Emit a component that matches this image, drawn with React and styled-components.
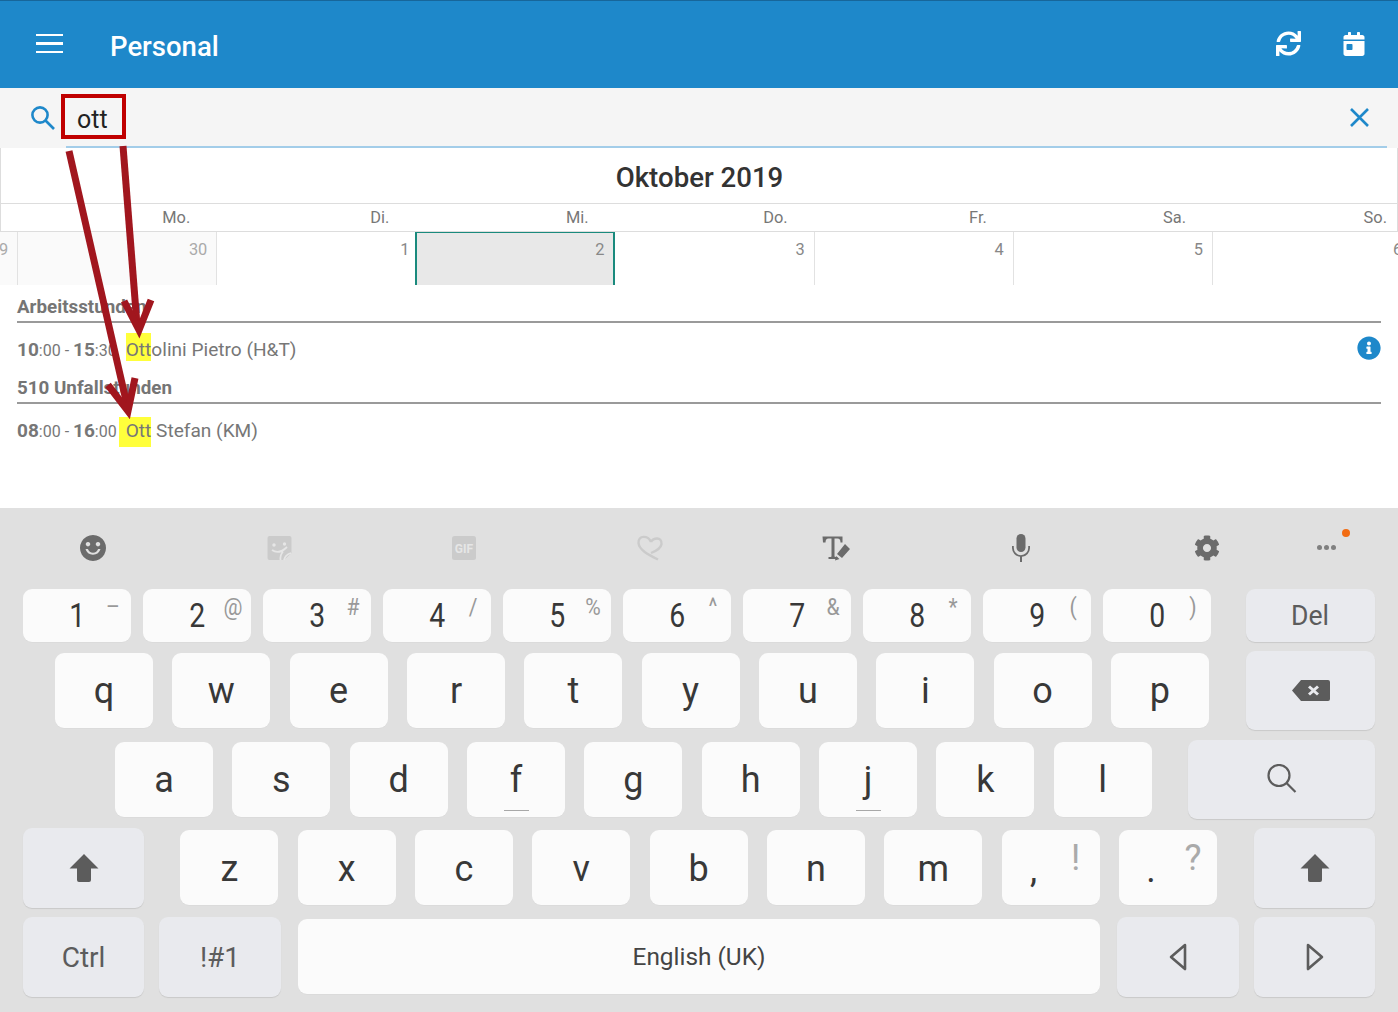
import React from 'react'
import styled, { createGlobalStyle } from 'styled-components'
import { FaSync, FaCalendarDay, FaInfoCircle, FaCog } from 'react-icons/fa'

const Global = createGlobalStyle`
  html, body { margin: 0; padding: 0; background: #fff; }
  body { font-family: Roboto, "Liberation Sans", sans-serif; }
`

const Page = styled.div`
  position: relative;
  width: 1398px;
  height: 1012px;
  overflow: hidden;
  display: flex;
  flex-direction: column;
  background: #fff;
`

const Header = styled.header`
  box-sizing: border-box;
  height: 88px;
  flex: none;
  background: #1e88ca;
  border-top: 1px solid #17669a;
  display: flex;
  align-items: center;
  color: #fff;
  padding: 0 32px 0 36px;
`
const Burger = styled.div`
  width: 27px;
  display: flex;
  flex-direction: column;
  gap: 6px;
  margin-right: 47px;
  margin-top: -2px;
  span { display: block; height: 2.5px; background: #fff; }
`
const Title = styled.div`
  flex: 1;
  font-size: 27.5px;
  font-weight: 500;
  margin-top: 4px;
`
const HeaderIcons = styled.div`
  display: flex;
  align-items: center;
  gap: 41px;
  margin-top: -2px;
`

const SearchBar = styled.div`
  position: relative;
  box-sizing: border-box;
  height: 60px;
  flex: none;
  background: #f5f5f5;
  display: flex;
  align-items: flex-start;
  padding: 6px 28px 0 30px;
  &::after {
    content: '';
    position: absolute;
    left: 66px;
    right: 11px;
    bottom: 0;
    height: 2px;
    background: #a3cde9;
  }
`
const SearchIcon = styled.svg`
  width: 26px;
  height: 26px;
  margin: 11px 5px 0 0;
  flex: none;
`
const Query = styled.div`
  box-sizing: border-box;
  width: 65px;
  height: 45px;
  border: 4px solid #c00000;
  font-size: 25px;
  line-height: 44px;
  padding-left: 12px;
  color: #222;
`
const CloseIcon = styled.svg`
  width: 21px;
  height: 21px;
  margin: 13px 0 0 auto;
`

const MonthTitle = styled.div`
  box-sizing: border-box;
  height: 55px;
  flex: none;
  display: flex;
  align-items: center;
  justify-content: center;
  padding: 3px 0 0 1px;
  font-size: 27.6px;
  font-weight: 500;
  color: #333;
  border: 1px solid #ddd;
  border-top: 0;
  border-bottom: 0;
`
const WeekRow = styled.div`
  box-sizing: border-box;
  height: 29px;
  flex: none;
  display: flex;
  justify-content: flex-end;
  padding-right: 10px;
  border: 1px solid #ddd;
  overflow: hidden;
`
const WeekDay = styled.div`
  flex: none;
  width: 199.17px;
  text-align: right;
  font-size: 16.4px;
  line-height: 28px;
  color: #777;
  &:last-child { width: 201px; }
`
const DateRow = styled.div`
  height: 53px;
  flex: none;
  display: flex;
  margin-left: -181px;
  width: 1600px;
`
const DateCell = styled.div`
  box-sizing: border-box;
  flex: none;
  width: 199.17px;
  text-align: right;
  font-size: 16.4px;
  line-height: 36px;
  padding-right: ${p => p.$pr || '9px'};
  color: ${p => (p.$past ? '#aaa' : '#888')};
  background: ${p => (p.$selected ? '#e8e8e8' : p.$past ? '#fafafa' : '#fff')};
  border-right: 1px solid #e2e2e2;
  ${p => p.$selected && `
    border-left: 2px solid #1a8a7d;
    border-right: 2px solid #1a8a7d;
    border-top: 1px solid #1a8a7d;
    line-height: 34px;
    margin-left: -1px;
    width: 200px;
  `}
`

const Entries = styled.div`
  flex: 1;
  padding: 10px 17px 0;
`
const SectionTitle = styled.div`
  box-sizing: border-box;
  height: 28px;
  font-size: 18.8px;
  font-weight: 700;
  line-height: 24px;
  color: #757575;
  border-bottom: 2px solid #9a9a9a;
`
const EntryRow = styled.div`
  box-sizing: border-box;
  height: 53px;
  padding-top: 16px;
  display: flex;
  align-items: baseline;
  font-size: 19.1px;
  line-height: 22px;
  color: #777;
  white-space: pre;
`
const Time = styled.span`
  font-size: 16px;
  b { font-size: 19px; font-weight: 700; }
`
const Mark = styled.span`
  background: #ffff3b;
  margin: ${p => (p.$lead ? '-3px 0 -5px 2px' : '-6px 0 0 9px')};
  padding: ${p => (p.$lead ? '3px 0 5px 7px' : '6px 0 0')};
`
const InfoIcon = styled.div`
  align-self: flex-start;
  margin: -3px 0 0 auto;
  display: flex;
`

const Keyboard = styled.div`
  height: 504px;
  flex: none;
  background: #e0e0e0;
  color: #383838;
`
const ToolBar = styled.div`
  height: 81px;
  display: grid;
  grid-template-columns: repeat(7, 185.7px) 54px;
  align-items: center;
  justify-items: center;
  padding-bottom: 2px;
  box-sizing: border-box;
`
const ToolIcon = styled.svg`
  width: 30px;
  height: 30px;
  fill: ${p => (p.$off ? '#cbcbcb' : '#6b6b6b')};
`
const Dots = styled.div`
  position: relative;
  display: flex;
  gap: 2px;
  span { width: 5px; height: 5px; border-radius: 50%; background: #808080; }
  &::after {
    content: '';
    position: absolute;
    top: -16px;
    right: -14px;
    width: 8px;
    height: 8px;
    border-radius: 50%;
    background: #f26c13;
  }
`
const Row = styled.div`
  display: flex;
  align-items: center;
  gap: ${p => p.$gap || '19.33px'};
  height: ${p => p.$h};
  margin-top: ${p => p.$mt || '9px'};
  padding: 0 23px 0 ${p => p.$pl || '23px'};
`
const Key = styled.div`
  position: relative;
  box-sizing: border-box;
  flex: none;
  width: ${p => p.$w || '98px'};
  height: ${p => p.$h || '75px'};
  margin-bottom: 1px;
  padding-top: 2px;
  border-radius: 9px;
  background: #fbfbfb;
  display: flex;
  align-items: center;
  justify-content: center;
  font-size: 36px;
  box-shadow: 0 1px 0 rgba(0,0,0,0.02);
`
const FnKey = styled(Key)`
  background: #e9eaee;
  font-size: 28px;
  color: #5c5c5c;
  box-shadow: 0 1px 1px rgba(0,0,0,0.1);
  margin-bottom: 0;
  padding-top: 0;
  margin-left: ${p => p.$ml || '0'};
`
const Digit = styled.span`
  display: block;
  font-size: 33px;
  margin-top: -2px;
  transform: scaleX(0.86);
`
const Hint = styled.span`
  position: absolute;
  left: 90px;
  top: 18px;
  transform: translate(-50%, -50%) scaleX(0.88);
  font-size: 24px;
  color: #999;
`
const BigHint = styled.span`
  position: absolute;
  left: 74px;
  top: 28px;
  transform: translate(-50%, -50%);
  font-size: 36px;
  color: #aaa;
`
const Underline = styled.span`
  position: absolute;
  left: 37px;
  bottom: 6px;
  width: 25px;
  height: 1px;
  background: #a8a8a8;
`
const Narrow = styled.span`
  display: block;
  transform: scaleX(0.95);
`
const Punct = styled.span`
  display: block;
  margin: 2px 34px 0 0;
`
const SpaceKey = styled(Key)`
  font-size: 24.4px;
  color: #444;
  margin-left: 2px;
  padding-top: 0;
`
const LeadKey = styled(Key)`
  margin-left: 17px;
`

const numbers = [['1', '–'], ['2', '@'], ['3', '#'], ['4', '/'], ['5', '%'], ['6', '^'], ['7', '&'], ['8', '*'], ['9', '('], ['0', ')']]
const dates = [['29', 1], ['30', 1], ['1', 0, 0, '6px'], ['2', 0, 1], ['3'], ['4'], ['5'], ['6']]
const days = ['Mo.', 'Di.', 'Mi.', 'Do.', 'Fr.', 'Sa.', 'So.']

const Arrows = styled.svg`
  position: absolute;
  left: 0;
  top: 0;
  pointer-events: none;
`

const ShiftIcon = () => (
  <svg width="30" height="30" viewBox="0 0 30 30" fill="#5c5c5c">
    <path d="M15 1 L29.5 15.5 L22 15.5 L22 27 Q22 29 20 29 L10 29 Q8 29 8 27 L8 15.5 L0.5 15.5 Z" />
  </svg>
)

export default function App() {
  return (
    <Page>
      <Global />
      <Header>
        <Burger><span /><span /><span /></Burger>
        <Title>Personal</Title>
        <HeaderIcons>
          <FaSync size={25} />
          <FaCalendarDay size={24} />
        </HeaderIcons>
      </Header>

      <SearchBar>
        <SearchIcon viewBox="0 0 26 26" fill="none" stroke="#1e88ca" strokeWidth="2.6">
          <circle cx="10" cy="10" r="7.6" />
          <path d="M15.5 15.5 L24 24" />
        </SearchIcon>
        <Query>ott</Query>
        <CloseIcon viewBox="0 0 21 21" fill="none" stroke="#1e88ca" strokeWidth="2.6">
          <path d="M2 2 L19 19 M19 2 L2 19" />
        </CloseIcon>
      </SearchBar>

      <MonthTitle>Oktober 2019</MonthTitle>
      <WeekRow>
        {days.map(d => <WeekDay key={d}>{d}</WeekDay>)}
      </WeekRow>
      <DateRow>
        {dates.map(([d, past, sel, pr]) => (
          <DateCell key={d} $past={!!past} $selected={!!sel} $pr={pr}>{d}</DateCell>
        ))}
      </DateRow>

      <Entries>
        <SectionTitle>Arbeitsstunden</SectionTitle>
        <EntryRow>
          <Time><b>10</b>:00 - <b>15</b>:30</Time>
          <Mark>Ott</Mark>olini Pietro (H&amp;T)
          <InfoIcon><FaInfoCircle size={24} color="#1e88ca" /></InfoIcon>
        </EntryRow>
        <SectionTitle>510 Unfallstunden</SectionTitle>
        <EntryRow>
          <Time><b>08</b>:00 - <b>16</b>:00</Time>
          <Mark $lead>Ott</Mark> Stefan (KM)
        </EntryRow>
      </Entries>

      <Keyboard>
        <ToolBar>
          <ToolIcon viewBox="0 0 30 30">
            <path fillRule="evenodd" d="M15 2 a13 13 0 1 0 0.01 0 Z M10 9 a2.2 2.2 0 1 1 -0.01 0 Z M20 9 a2.2 2.2 0 1 1 -0.01 0 Z M7.5 16 h2.4 a5.4 5.4 0 0 0 10.2 0 h2.4 a7.8 7.8 0 0 1 -15 0 Z" />
          </ToolIcon>
          <ToolIcon $off viewBox="0 0 30 30">
            <path d="M5.5 3 h20 a2 2 0 0 1 2 2 v15 l-7.5 7 h-14.5 a2 2 0 0 1 -2 -2 v-20 a2 2 0 0 1 2 -2 Z" />
            <circle cx="10" cy="12" r="1.7" fill="#e6e6e6" />
            <circle cx="20.5" cy="11" r="1.7" fill="#e6e6e6" />
            <path d="M8 17 Q15 22 23 14 M19 18.5 Q16 22 16.5 27 M20 27 Q21 22 27 20" fill="none" stroke="#e6e6e6" strokeWidth="1.8" />
          </ToolIcon>
          <ToolIcon $off viewBox="0 0 30 30">
            <rect x="3" y="3" width="24" height="24" rx="2.5" />
            <text x="15" y="19.5" textAnchor="middle" fontSize="12" fontWeight="700" fontFamily="Roboto, sans-serif" fill="#e6e6e6">GIF</text>
          </ToolIcon>
          <ToolIcon $off viewBox="0 0 30 30" style={{ fill: 'none' }}>
            <path d="M16 9 C13 2 3 2 3.5 10 C4 17 14 22 23 26.5 M16 9 C18 5 27 3 26.5 11 C26 15 21 18 16 20" stroke="#cbcbcb" strokeWidth="2.4" />
          </ToolIcon>
          <ToolIcon viewBox="0 0 30 30">
            <path d="M1.5 3.5 h20 v6 h-2 q0 -4 -3 -4 h-3 v18 q0 .6 3 .6 v2 h-9 v-2 q3 0 3 -.6 v-18 h-3 q-3 0 -3 4 h-2.5 Z" />
            <path d="M24 11 L29 16 L21 25 L16 21 Z M15 23 L18.5 26 L14 27.5 Z" />
          </ToolIcon>
          <ToolIcon viewBox="0 0 30 30">
            <rect x="10.5" y="1" width="9" height="18" rx="4.5" />
            <path d="M6 13 v2 a9 9 0 0 0 8 8.8 v5.2 h2 v-5.2 a9 9 0 0 0 8 -8.8 v-2 h-1.8 v2 a7.2 7.2 0 0 1 -14.4 0 v-2 Z" />
          </ToolIcon>
          <FaCog size={26} color="#6b6b6b" />
          <Dots><span /><span /><span /></Dots>
        </ToolBar>

        <Row $h="53px" $gap="12px" $mt="0">
          {numbers.map(([n, h]) => (
            <Key key={n} $w="108px" $h="53px">
              <Digit>{n}</Digit><Hint>{h}</Hint>
            </Key>
          ))}
          <FnKey $w="129px" $h="53px" $ml="auto"><Narrow>Del</Narrow></FnKey>
        </Row>

        <Row $h="79px" $pl="55px">
          {'qwertyuiop'.split('').map(c => <Key key={c}>{c}</Key>)}
          <FnKey $w="129px" $h="79px" $ml="auto">
            <svg width="40" height="26" viewBox="0 0 40 26" fill="#5c5c5c">
              <path fillRule="evenodd" d="M10 2 H37 a2 2 0 0 1 2 2 V21 a2 2 0 0 1 -2 2 H10 L1 12.5 Z M19 7.5 L17 9.5 L20.5 12.5 L17 15.5 L19 17.5 L22.5 14.5 L26 17.5 L28 15.5 L24.5 12.5 L28 9.5 L26 7.5 L22.5 10.5 Z" />
            </svg>
          </FnKey>
        </Row>

        <Row $h="79px" $pl="115px" $mt="10px">
          {'asdfghjkl'.split('').map(c => (
            <Key key={c}>{c}{(c === 'f' || c === 'j') && <Underline />}</Key>
          ))}
          <FnKey $w="187px" $h="79px" $ml="auto">
            <svg width="32" height="32" viewBox="0 0 32 32" fill="none" stroke="#5c5c5c" strokeWidth="2.2">
              <circle cx="13" cy="11.5" r="10.5" />
              <path d="M20.5 19 L29.5 28" />
            </svg>
          </FnKey>
        </Row>

        <Row $h="80px">
          <FnKey $w="121px" $h="80px"><ShiftIcon /></FnKey>
          <LeadKey>z</LeadKey>
          {'xcvbnm'.split('').map(c => <Key key={c}>{c}</Key>)}
          <Key><Punct>,</Punct><BigHint>!</BigHint></Key>
          <Key><Punct>.</Punct><BigHint>?</BigHint></Key>
          <FnKey $w="121px" $h="80px" $ml="auto"><ShiftIcon /></FnKey>
        </Row>

        <Row $h="80px" $gap="15px">
          <FnKey $w="121px" $h="80px">Ctrl</FnKey>
          <FnKey $w="122px" $h="80px">!#1</FnKey>
          <SpaceKey $w="802px">English (UK)</SpaceKey>
          <FnKey $w="122px" $h="80px" $ml="2px">
            <svg width="20" height="28" viewBox="0 0 20 28" fill="none" stroke="#5c5c5c" strokeWidth="2.6" strokeLinejoin="round">
              <path d="M17 2 L3 14 L17 26 Z" />
            </svg>
          </FnKey>
          <FnKey $w="121px" $h="80px">
            <svg width="20" height="28" viewBox="0 0 20 28" fill="none" stroke="#5c5c5c" strokeWidth="2.6" strokeLinejoin="round">
              <path d="M3 2 L17 14 L3 26 Z" />
            </svg>
          </FnKey>
        </Row>
      </Keyboard>

      <Arrows width="1398" height="1012" viewBox="0 0 1398 1012" fill="none" stroke="#a1161e" strokeWidth="7">
        <path d="M123 146 L137 325" />
        <path d="M124 301 L139 330 L151 300" />
        <path d="M69 151 L127 405" />
        <path d="M108 385 L128 411 L135 378" />
      </Arrows>
    </Page>
  )
}
